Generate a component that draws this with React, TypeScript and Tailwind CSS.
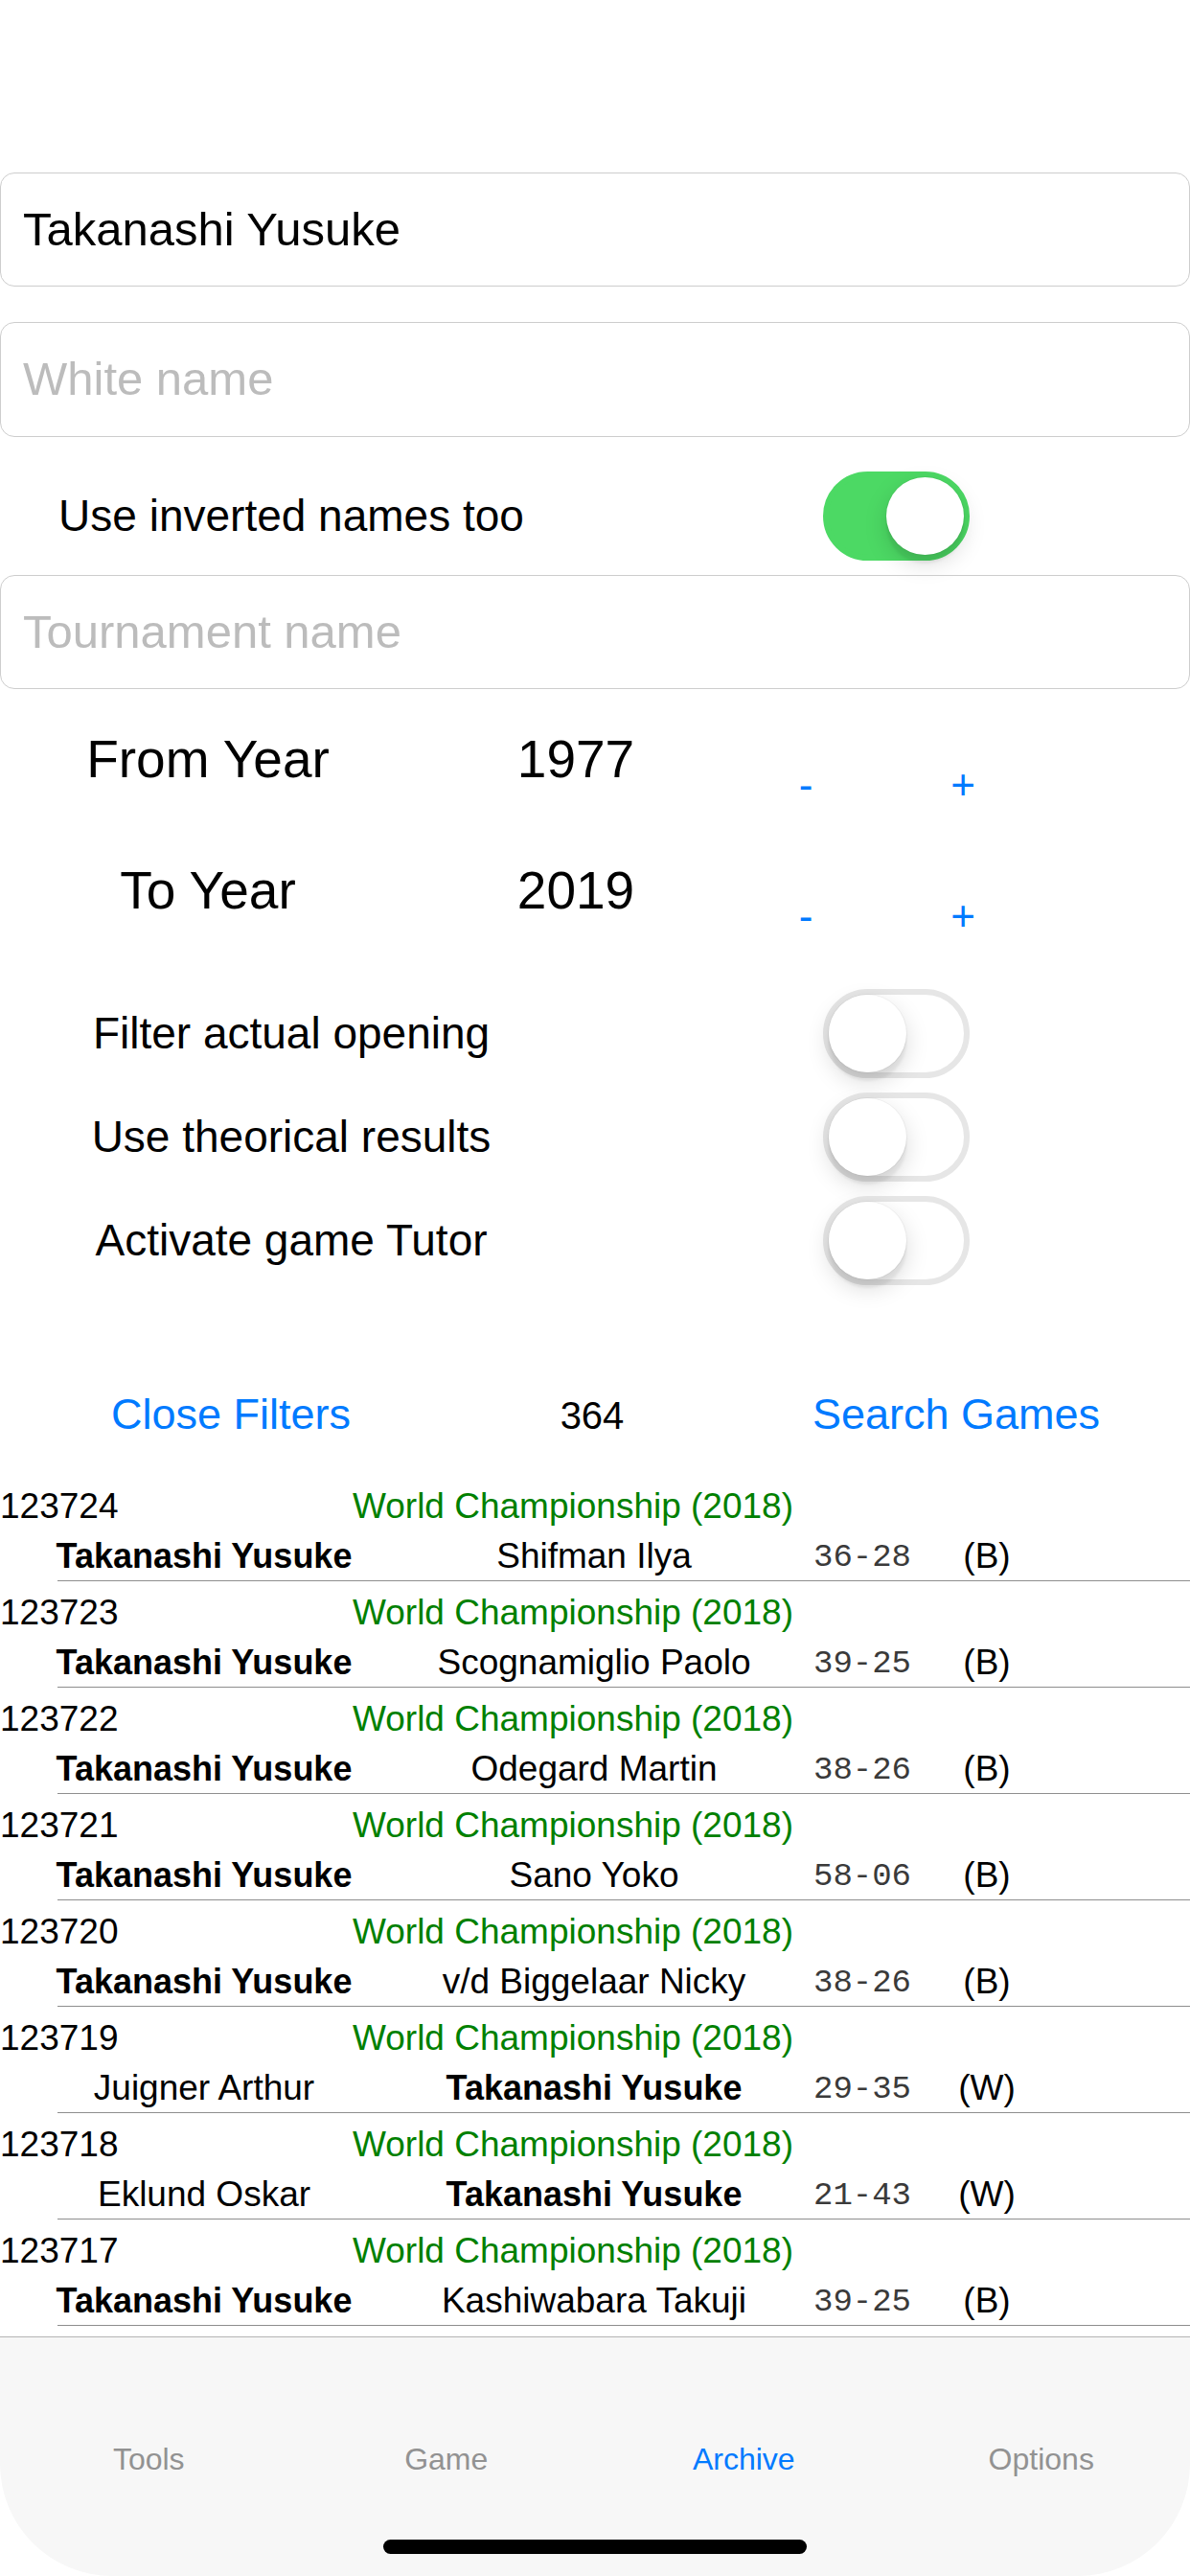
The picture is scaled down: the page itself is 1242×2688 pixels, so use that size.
import React from 'react'

const games = [
  { id: '123724', white: 'Takanashi Yusuke', black: 'Shifman Ilya', score: '36-28', res: '(B)', me: 'white' },
  { id: '123723', white: 'Takanashi Yusuke', black: 'Scognamiglio Paolo', score: '39-25', res: '(B)', me: 'white' },
  { id: '123722', white: 'Takanashi Yusuke', black: 'Odegard Martin', score: '38-26', res: '(B)', me: 'white' },
  { id: '123721', white: 'Takanashi Yusuke', black: 'Sano Yoko', score: '58-06', res: '(B)', me: 'white' },
  { id: '123720', white: 'Takanashi Yusuke', black: 'v/d Biggelaar Nicky', score: '38-26', res: '(B)', me: 'white' },
  { id: '123719', white: 'Juigner Arthur', black: 'Takanashi Yusuke', score: '29-35', res: '(W)', me: 'black' },
  { id: '123718', white: 'Eklund Oskar', black: 'Takanashi Yusuke', score: '21-43', res: '(W)', me: 'black' },
  { id: '123717', white: 'Takanashi Yusuke', black: 'Kashiwabara Takuji', score: '39-25', res: '(B)', me: 'white' },
]

function Switch({ on }: { on: boolean }) {
  return (
    <div
      className={
        on
          ? 'w-[153px] h-[93px] rounded-full border-[6px] border-[#4cd964] bg-[#4cd964] flex justify-end'
          : 'w-[153px] h-[93px] rounded-full border-[6px] border-[#e6e6e6] bg-white flex justify-start'
      }
    >
      <div className="w-[81px] h-[81px] rounded-full bg-white shadow-[0_9px_3px_rgba(0,0,0,0.06),0_9px_24px_rgba(0,0,0,0.15),0_0_0_1px_rgba(0,0,0,0.04)]" />
    </div>
  )
}

function Field({ value, placeholder, h }: { value?: string; placeholder: string; h: string }) {
  return (
    <div className={`${h} w-full border border-[#cdcdcd] rounded-[15px] flex items-center pl-[23px] text-[49px]`}>
      {value ? (
        <span className="text-black">{value}</span>
      ) : (
        <span className="text-[#bcbcbc]">{placeholder}</span>
      )}
    </div>
  )
}

function YearRow({ label, year, mt }: { label: string; year: string; mt: string }) {
  return (
    <div className={`${mt} flex items-start text-[55px] leading-[64px] text-black`}>
      <span className="w-[434px] text-center">{label}</span>
      <span className="w-[334px] text-center">{year}</span>
      <span className="w-[146px] mt-[27px] text-center text-[44px] text-[#007aff]">-</span>
      <span className="w-[182px] mt-[27px] text-center text-[44px] text-[#007aff]">+</span>
    </div>
  )
}

function OptionRow({ label }: { label: string }) {
  return (
    <div className="h-[108px] flex items-center">
      <span className="w-[608px] text-center text-[46px] text-black">{label}</span>
      <div className="ml-[251px]">
        <Switch on={false} />
      </div>
    </div>
  )
}

export default function App() {
  return (
    <div
      className="w-[1242px] h-[2688px] bg-white flex flex-col overflow-hidden"
      style={{ fontFamily: '"Liberation Sans", Arial, sans-serif' }}
    >
      <div className="h-[180px] shrink-0" />
      <Field value="Takanashi Yusuke" placeholder="Black name" h="h-[119px]" />
      <div className="mt-[37px]">
        <Field placeholder="White name" h="h-[120px]" />
      </div>

      {/* inverted names */}
      <div className="h-[144px] pt-[36px] flex items-start shrink-0">
        <div className="w-[608px] h-[93px] flex items-center justify-center text-[46px] text-black">
          Use inverted names too
        </div>
        <div className="ml-[251px]">
          <Switch on />
        </div>
      </div>

      <Field placeholder="Tournament name" h="h-[119px]" />

      <YearRow label="From Year" year="1977" mt="mt-[41px]" />
      <YearRow label="To Year" year="2019" mt="mt-[46px]" />

      <div className="mt-[36px]">
        <OptionRow label="Filter actual opening" />
        <OptionRow label="Use theorical results" />
        <OptionRow label="Activate game Tutor" />
      </div>

      <div className="mt-[102px] flex items-baseline leading-[52px]">
        <span className="w-[482px] text-center text-[45px] text-[#007aff]">Close Filters</span>
        <span className="w-[272px] text-center text-[40px] text-black">364</span>
        <span className="w-[488px] text-center text-[45px] text-[#007aff]">Search Games</span>
      </div>

      <div className="mt-[41px] flex-1 overflow-hidden">
        {games.map((g) => (
          <div key={g.id} className="h-[111px] pb-[5px]">
            <div className="h-[55px] flex leading-[55px] text-[37px]">
              <span className="w-[368px] text-black">{g.id}</span>
              <span className="text-[#008000]">World Championship (2018)</span>
            </div>
            <div className="h-[50px] flex items-baseline leading-[50px] text-[37px] text-black">
              <span className={`w-[426px] text-center ${g.me === 'white' ? 'font-bold text-[36px]' : ''}`}>
                {g.white}
              </span>
              <span className={`w-[388px] text-center ${g.me === 'black' ? 'font-bold text-[36px]' : ''}`}>
                {g.black}
              </span>
              <span
                className="w-[172px] text-center text-[34px] text-[#3a3a3a] -translate-y-[2px]"
                style={{ fontFamily: '"Liberation Mono", "DejaVu Sans Mono", monospace' }}
              >
                {g.score}
              </span>
              <span className="w-[88px] text-center">{g.res}</span>
            </div>
            <div className="ml-[60px] h-px bg-[#8e8e8e]" />
          </div>
        ))}
      </div>

      {/* tab bar */}
      <div className="h-[250px] shrink-0 bg-[#f7f7f7] border-t border-[#b4b4b4] rounded-b-[117px] flex flex-col items-center pt-[109px]">
        <div className="w-full grid grid-cols-4 text-[32px] leading-[36px] text-center">
          <span className="text-[#929292]">Tools</span>
          <span className="text-[#929292]">Game</span>
          <span className="text-[#007aff]">Archive</span>
          <span className="text-[#929292]">Options</span>
        </div>
        <div className="mt-[66px] w-[442px] h-[15px] rounded-full bg-black" />
      </div>
    </div>
  )
}
